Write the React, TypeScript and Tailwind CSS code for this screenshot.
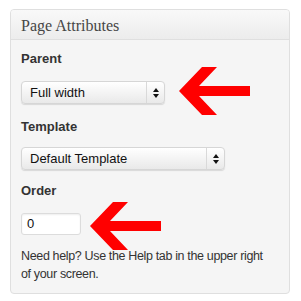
import React from 'react';

function RedArrow({ className }: { className: string }) {
  return (
    <svg width="71" height="48" viewBox="0 0 71 48" className={className}>
      <polygon points="0,24 23,0 38,0 20,19 71,19 71,29 20,29 38,48 23,48" fill="#ff0000" />
    </svg>
  );
}

function Spinner() {
  return (
    <span className="flex flex-col items-center gap-[2px]">
      <svg width="6" height="4" viewBox="0 0 6 4"><polygon points="3,0 6,4 0,4" fill="#111" /></svg>
      <svg width="6" height="4" viewBox="0 0 6 4"><polygon points="0,0 6,0 3,4" fill="#111" /></svg>
    </span>
  );
}

function FakeSelect({ label, width }: { label: string; width: string }) {
  return (
    <div
      className={`${width} h-[23px] flex items-center rounded-[4px] border border-[#d6d6d6] bg-gradient-to-b from-white to-[#e9e9e9] shadow-[0_1px_1px_rgba(0,0,0,0.12)]`}
    >
      <span className="flex-1 pl-[8px] text-[13px] text-[#111]">{label}</span>
      <span className="w-[18px] h-full flex items-center justify-center border-l border-[#d9d9d9]">
        <Spinner />
      </span>
    </div>
  );
}

export default function App() {
  return (
    <div className="w-[301px] h-[301px] bg-white pt-[9px] pl-[10px] relative font-['Liberation_Sans',Arial,sans-serif]">
      <div className="w-[280px] h-[285px] border border-[#dfdfdf] rounded-[4px] bg-[#f5f5f5] overflow-hidden">
        {/* header */}
        <div className="h-[30px] border-b border-[#dfdfdf] bg-gradient-to-b from-[#f9f9f9] to-[#ececec] flex items-center pl-[10px]">
          <h3 className="text-[16px] text-[#464646] font-['Liberation_Serif',Georgia,serif] leading-none pt-[2px]">
            Page Attributes
          </h3>
        </div>

        <div className="pl-[10px] pt-[11px]">
          <p className="text-[13px] font-bold text-[#333] leading-[16px]">Parent</p>
          <div className="mt-[14px]">
            <FakeSelect label="Full width" width="w-[144px]" />
          </div>

          <p className="mt-[15px] text-[13px] font-bold text-[#333] leading-[16px]">Template</p>
          <div className="mt-[12px]">
            <FakeSelect label="Default Template" width="w-[204px]" />
          </div>

          <p className="mt-[13px] text-[13px] font-bold text-[#333] leading-[16px]">Order</p>
          <div className="mt-[14px] w-[60px] h-[22px] rounded-[3px] border border-[#dcdcdc] bg-white shadow-[inset_0_1px_2px_rgba(0,0,0,0.07)] flex items-center pl-[5px] text-[13px] text-[#111]">
            0
          </div>

          <p className="mt-[12px] text-[12.5px] text-[#333] leading-[18px] tracking-[-0.35px] whitespace-nowrap">
            Need help? Use the Help tab in the upper right
            <br />
            of your screen.
          </p>
        </div>
      </div>

      {/* annotation arrows */}
      <RedArrow className="absolute left-[179px] top-[67px]" />
      <RedArrow className="absolute left-[90px] top-[202px]" />
    </div>
  );
}
